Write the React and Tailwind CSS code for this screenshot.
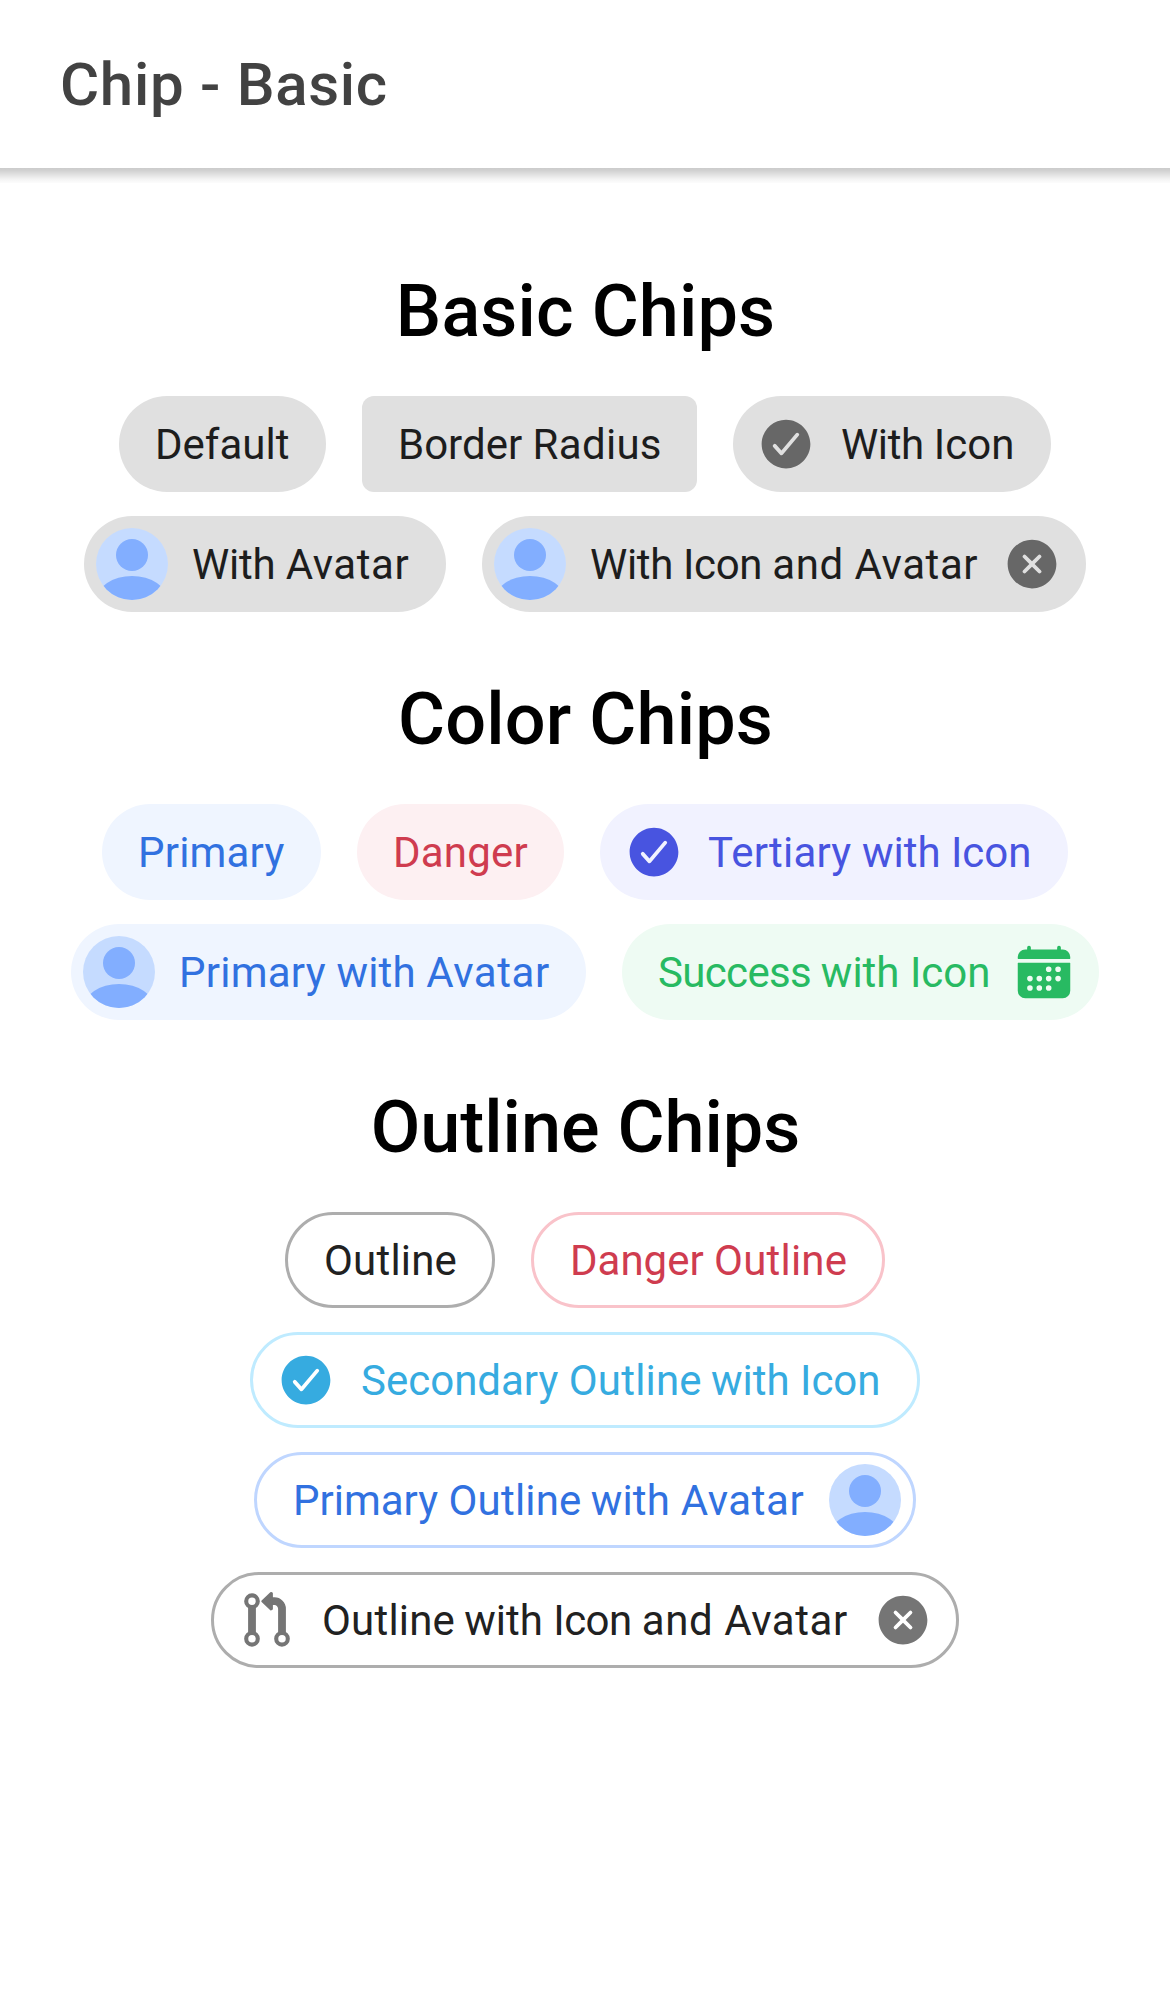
import { IoCheckmarkCircle, IoCloseCircle, IoCalendar } from "react-icons/io5";

function Avatar({ className = "" }) {
  return (
    <svg viewBox="0 0 72 72" className={`size-[72px] shrink-0 rounded-full ${className}`}>
      <rect width="72" height="72" fill="#c5dbff" />
      <circle cx="36" cy="27" r="16" fill="#82aeff" />
      <ellipse cx="36" cy="72" rx="35.3" ry="24" fill="#82aeff" />
    </svg>
  );
}

function PullRequestIcon({ className = "" }) {
  return (
    <svg viewBox="0 0 60 60" fill="none" stroke="currentColor" className={className}>
      <g strokeWidth="4.1">
        <circle cx="15" cy="11.2" r="5.8" />
        <circle cx="15" cy="48.8" r="5.8" />
        <circle cx="45" cy="48.8" r="5.8" />
      </g>
      <path d="M15 16.5V43.5M34 11.2H37.5A7.5 7.5 0 0 1 45 18.7V43.5" strokeWidth="7.8" />
      <path d="M25.3 11.2L34 2.9L34.9 3.4V19L34 19.5Z" fill="currentColor" strokeWidth="2" strokeLinejoin="round" />
    </svg>
  );
}

function Chip({ className = "", shape = "rounded-full", children }) {
  return (
    <div className={`flex h-24 shrink-0 items-center px-9 text-[42px] leading-[60px] ${shape} ${className}`}>
      {children}
    </div>
  );
}

function Label({ className = "", children }) {
  return <span className={`shrink-0 pt-0.5 whitespace-pre ${className}`}>{children}</span>;
}

function Row({ children }) {
  return <div className="flex justify-center gap-9">{children}</div>;
}

function Section({ title, titleClass = "", children }) {
  return (
    <section className="flex flex-col gap-6 pb-16">
      <h2 className={`mb-[17px] pl-px text-center text-[72px] leading-[87px] font-medium text-black ${titleClass}`}>{title}</h2>
      {children}
    </section>
  );
}

const AvatarWord = () => <span className="tracking-[0.58px]">Avatar</span>;

export default function App() {
  return (
    <div className="h-[1992px] w-[1170px] overflow-hidden bg-white font-['Roboto',sans-serif]">
      <header className="flex h-[168px] items-center px-[60px]">
        <h1 className="pt-0.5 text-[60px] leading-[90px] font-medium tracking-[0.7px] text-[#424242]">Chip - Basic</h1>
      </header>
      <div className="h-[15px] bg-[linear-gradient(to_bottom,#cccccc_0%,#d0d0d0_15%,#e2e2e2_45%,#f4f4f4_75%,#fcfcfc_100%)]" />
      <main className="pt-[85px]">
        <Section title="Basic Chips" titleClass="tracking-[0.12px]">
          <Row>
            <Chip className="bg-[#e0e0e0] text-[#1d1d1d]">
              <Label className="w-[135px]">Default</Label>
            </Chip>
            <Chip shape="rounded-xl" className="bg-[#e0e0e0] text-[#1d1d1d]">
              <Label className="w-[263px]">Border <span className="tracking-[0.3px]">Radius</span></Label>
            </Chip>
            <Chip className="bg-[#e0e0e0] text-[#1d1d1d]">
              <IoCheckmarkCircle className="-ml-[13px] mr-[25px] size-[60px] text-[#676767]" />
              <Label className="w-[174px]"><span className="tracking-[-0.4px]">With </span>Icon</Label>
            </Chip>
          </Row>
          <Row>
            <Chip className="bg-[#e0e0e0] text-[#1d1d1d]">
              <Avatar className="-ml-6 mr-6" />
              <Label className="w-[218px]"><span className="tracking-[-0.2px]">With </span><AvatarWord /></Label>
            </Chip>
            <Chip className="bg-[#e0e0e0] text-[#1d1d1d]">
              <Avatar className="-ml-6 mr-6" />
              <Label className="w-[388px]">
                <span className="tracking-[-0.35px]">With Icon </span><span className="tracking-[0.55px]">and </span><AvatarWord />
              </Label>
              <IoCloseCircle className="ml-6 -mr-3 size-[60px] text-[#676767]" />
            </Chip>
          </Row>
        </Section>
        <Section title="Color Chips" titleClass="tracking-[0.15px]">
          <Row>
            <Chip className="bg-[#eff5ff] text-[#3171e0]">
              <Label className="w-[147px] tracking-[0.2px]">Primary</Label>
            </Chip>
            <Chip className="bg-[#fdf0f2] text-[#cf3c4f]">
              <Label className="w-[135px] tracking-[0.2px]">Danger</Label>
            </Chip>
            <Chip className="bg-[#f1f2ff] text-[#4854e0]">
              <IoCheckmarkCircle className="-ml-3 mr-6 size-[60px]" />
              <Label className="w-[324px]"><span className="tracking-[0.18px]">Tertiary </span>with Icon</Label>
            </Chip>
          </Row>
          <Row>
            <Chip className="bg-[#eff5ff] text-[#3171e0]">
              <Avatar className="-ml-6 mr-6" />
              <Label className="w-[371px]">
                <span className="tracking-[0.25px]">Primary </span><span className="tracking-[0.12px]">with </span><AvatarWord />
              </Label>
            </Chip>
            <Chip className="bg-[#eefbf3] text-[#28ba62]">
              <Label className="w-[333px]"><span className="tracking-[-0.66px]">Success </span>with Icon</Label>
              <IoCalendar className="ml-[23px] -mr-[11px] size-[60px]" />
            </Chip>
          </Row>
        </Section>
        <Section title="Outline Chips">
          <Row>
            <Chip className="border-[3px] border-[#adadad] text-[#212121]">
              <Label className="w-[132px] tracking-[0.2px]">Outline</Label>
            </Chip>
            <Chip className="border-[3px] border-[#f9c3ca] text-[#cf3c4f]">
              <Label className="w-[276px]">Danger <span className="tracking-[0.2px]">Outline</span></Label>
            </Chip>
          </Row>
          <Row>
            <Chip className="border-[3px] border-[#bfebff] text-[#36abe0]">
              <IoCheckmarkCircle className="-ml-[13px] mr-[25px] size-[60px]" />
              <Label className="w-[520px]">Secondary <span className="tracking-[0.2px]">Outline</span><span className="tracking-[-1.4px]"> </span>with Icon</Label>
            </Chip>
          </Row>
          <Row>
            <Chip className="border-[3px] border-[#bfd6ff] text-[#3171e0]">
              <Label className="w-[512px]">
                Primary <span className="tracking-[0.2px]">Outline</span><span className="tracking-[-1.4px]"> </span><span className="tracking-[0.2px]">with </span><AvatarWord />
              </Label>
              <Avatar className="-mr-6 ml-6" />
            </Chip>
          </Row>
          <Row>
            <Chip className="border-[3px] border-[#adadad] text-[#212121]">
              <PullRequestIcon className="-ml-[13px] mr-[25px] size-[60px] text-[#757575]" />
              <Label className="w-[526px]">
                <span className="tracking-[0.2px]">Outline</span><span className="tracking-[-1.4px]"> </span>with <span className="tracking-[-0.5px]">Icon </span><span className="tracking-[0.6px]">and </span><AvatarWord />
              </Label>
              <IoCloseCircle className="ml-[25px] -mr-[13px] size-[60px] text-[#757575]" />
            </Chip>
          </Row>
        </Section>
      </main>
    </div>
  );
}
